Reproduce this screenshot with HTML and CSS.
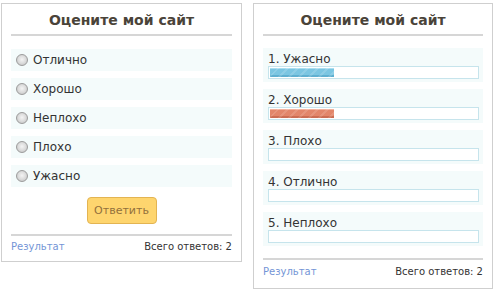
FILE: index.html
```html
<!DOCTYPE html>
<html lang="ru">
<head>
<meta charset="utf-8">
<title>Опрос</title>
<link rel="stylesheet" href="styles.css">
</head>
<body>
<div class="page">
  <div class="card card-vote">
    <div class="title">Оцените мой сайт</div>
    <ul class="options">
      <li class="opt"><span class="radio"></span><span>Отлично</span></li>
      <li class="opt"><span class="radio"></span><span>Хорошо</span></li>
      <li class="opt"><span class="radio"></span><span>Неплохо</span></li>
      <li class="opt"><span class="radio"></span><span>Плохо</span></li>
      <li class="opt"><span class="radio"></span><span>Ужасно</span></li>
    </ul>
    <div class="actions"><button class="btn">Ответить</button></div>
    <div class="footer"><a class="link">Результат</a><span>Всего ответов: 2</span></div>
  </div>
  <div class="card card-result">
    <div class="title">Оцените мой сайт</div>
    <ul class="results">
      <li class="res"><div class="res-label">1. Ужасно</div><div class="bar"><div class="fill fill-blue" style="width:31%"></div></div></li>
      <li class="res"><div class="res-label">2. Хорошо</div><div class="bar"><div class="fill fill-red" style="width:31%"></div></div></li>
      <li class="res"><div class="res-label">3. Плохо</div><div class="bar"></div></li>
      <li class="res"><div class="res-label">4. Отлично</div><div class="bar"></div></li>
      <li class="res"><div class="res-label">5. Неплохо</div><div class="bar"></div></li>
    </ul>
    <div class="footer"><a class="link">Результат</a><span>Всего ответов: 2</span></div>
  </div>
</div>
</body>
</html>
```
FILE: styles.css
```css
* { box-sizing: border-box; }
html, body { margin: 0; padding: 0; background: #fff; }
body { font-family: "DejaVu Sans", Verdana, sans-serif; color: #333; }
.page { display: flex; align-items: flex-start; gap: 11px; padding: 3px 0 0 1px; }
.card { border: 1px solid #cfcfcf; background: #fff; padding: 0 9px; }
.card-vote { width: 241px; }
.card-result { width: 240px; }
.title {
  font-weight: bold; font-size: 14px; line-height: 18px; color: #4a4339;
  text-align: center; padding: 7px 0 5px; border-bottom: 2px solid #d6d6d6;
}
.options, .results { list-style: none; margin: 13px 0 0; padding: 0; }
.results { margin-top: 12px; }
.opt {
  display: flex; align-items: center; height: 22px; margin-bottom: 7px;
  padding-left: 5px; background: #f4fbfb; font-size: 12px; color: #333;
}
.opt:last-child { margin-bottom: 0; }
.radio {
  width: 12px; height: 12px; border-radius: 50%; margin-right: 5px;
  border: 1px solid #9c9c9c;
  background: radial-gradient(circle at 50% 45%, #f4f4f4 0%, #dcdcdc 50%, #bdbdbd 100%);
}
.actions { display: flex; justify-content: center; padding: 10px 0; }
.btn {
  width: 70px; height: 27px; border: 1px solid #e3b452; border-radius: 4px;
  background: #fed56e; color: #92703c; font-family: "DejaVu Sans", Verdana, sans-serif;
  font-size: 11px; padding: 0;
}
.footer {
  display: flex; justify-content: space-between; border-top: 2px solid #d6d6d6;
  font-size: 10px; line-height: 14px; padding: 4px 0 7px; color: #333;
}
.link { color: #7495d6; }
.card-result .footer { margin-top: 12px; padding: 5px 0 9px; }
.res {
  height: 34px; margin-bottom: 7px; padding: 4px 4px 3px 5px; background: #f4fbfb;
}
.res:last-child { margin-bottom: 0; }
.res-label { font-size: 12px; line-height: 14px; color: #333; }
.bar { height: 13px; border: 1px solid #c6e4ec; background: #fff; padding: 1px; }
.fill { height: 9px; }
.fill-blue {
  background:
    repeating-linear-gradient(135deg, rgba(255,255,255,0) 0 5px, rgba(255,255,255,0.14) 5px 7px),
    linear-gradient(#a9def0 0 1px, #7bc6e2 1px 7px, #5fb0d0 7px);
}
.fill-red {
  background:
    repeating-linear-gradient(135deg, rgba(255,255,255,0) 0 5px, rgba(255,255,255,0.12) 5px 7px),
    linear-gradient(#f3b39e 0 1px, #e2866a 1px 7px, #cc6d52 7px);
}
```
